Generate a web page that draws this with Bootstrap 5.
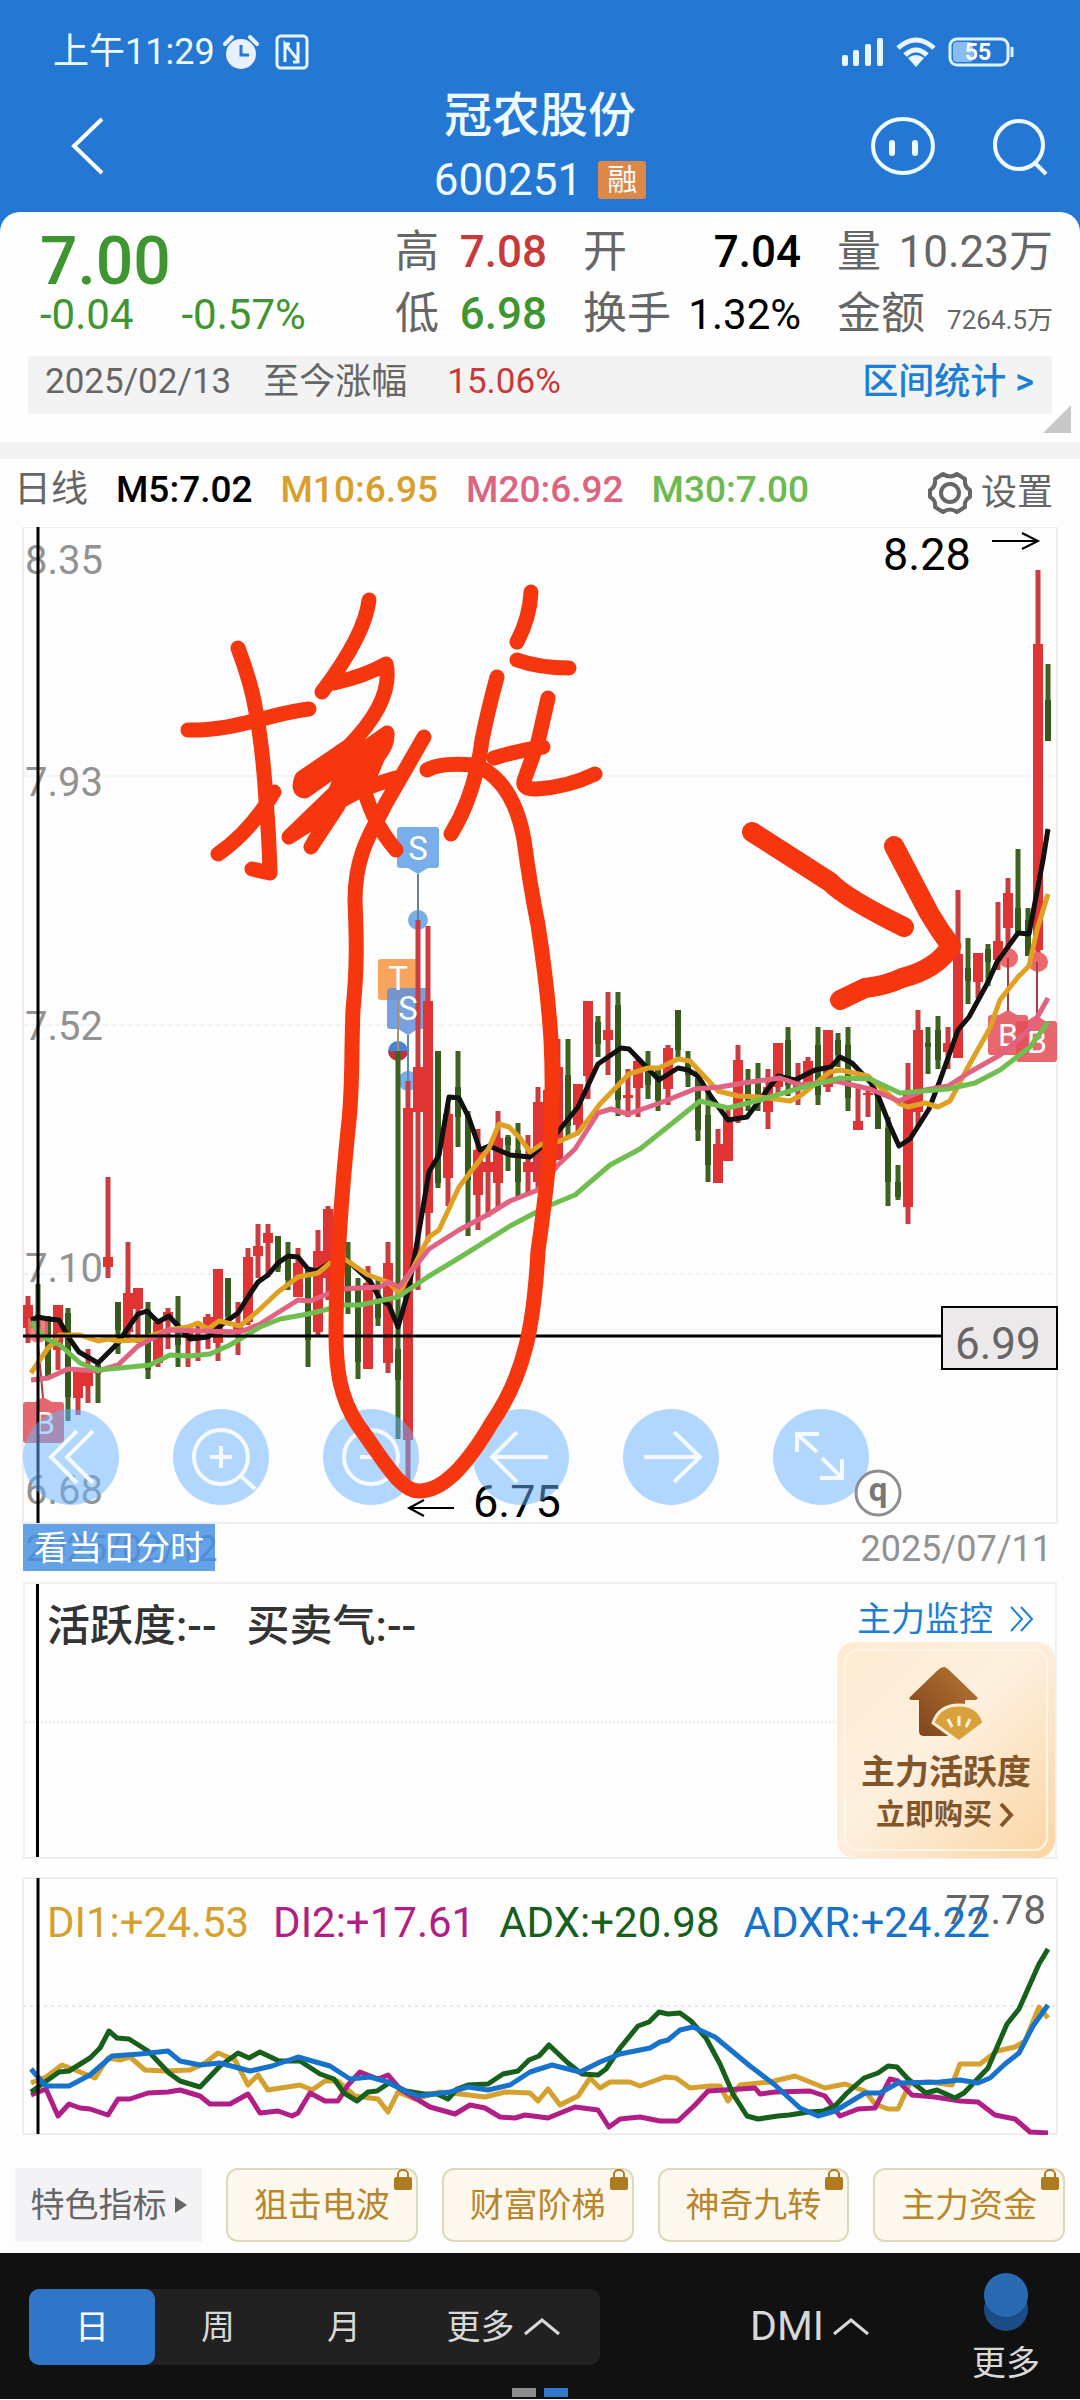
<!DOCTYPE html>
<html lang="zh-CN">
<head>
<meta charset="utf-8">
<meta name="viewport" content="width=device-width, initial-scale=1">
<title>冠农股份 600251</title>
<link href="https://cdn.jsdelivr.net/npm/bootstrap@5.3.0/dist/css/bootstrap.min.css" rel="stylesheet">
<style>
:root{--brand:#2478d4;--up:#c8393b;--down:#3f9630;--ink:#666;--link:#1b7fd6}
body{font-family:Roboto,"Noto Sans CJK SC",sans-serif;background:#fdfdfd;color:var(--ink)}
svg{display:block}
a{text-decoration:none}
button{border:0;padding:0;background:none;color:inherit}
.topbar{background:var(--brand);color:#effaff;padding-top:32px}
.status{height:40px;padding:0 66px 0 53px;font-size:36px;line-height:40px}
.heading{margin-top:12px;padding:0 30px;line-height:64px}
.side{flex:1 1 0}
.back{margin-left:38px}
.robot{margin-right:56px}
.stock-name{font-size:48px;font-weight:500;line-height:64px;margin:0}
.stock-code{font-size:44px}
.margin-tag{background:#dd8847;font-size:30px;line-height:38px;padding:0 9px;border-radius:3px}
.sheet-wrap{background:var(--brand)}
.sheet{background:#fdfefd;border-radius:20px 20px 0 0;padding-bottom:28px}
.quote{display:grid;grid-template-columns:1fr 152px 218px 216px;column-gap:36px;padding:9px 27px 0 40px;font-size:44px;line-height:62px}
.price-block{grid-row:span 2;padding-top:6px;color:var(--down)}
.price-now{font-size:66px;font-weight:500;line-height:70px}
.price-diff{font-size:42px;line-height:36px;gap:48px}
.t42{font-size:42px}.t26{font-size:26px}
.up{color:var(--up)}.down{color:var(--down)}.black{color:#000}
.range-bar{background:#f3f3f3;margin:5px 28px 0;padding:0 18px 0 17px;font-size:36px;line-height:52px;height:58px}
.range-bar a{color:var(--link);font-weight:500}
.t35{font-size:35px}
.corner{right:9px;bottom:9px}
.divider{height:17px;background:#f3f3f3}
.legend-row{height:68px;padding:0 27px 0 14px;font-size:37px;line-height:62px}
.legend-row .items{gap:28px}
.fw5{font-weight:500}
.t36{font-size:36px}
.tools{left:23px;bottom:68px;gap:54px}
.tool{width:96px;height:96px;border-radius:50%;background:rgba(104,178,255,.5)}
.day-btn{left:23px;bottom:2px;height:47px;padding:0 11px;background:rgba(65,142,226,.82);color:#fff;font-size:34px;line-height:44px}
.ink-layer{left:0;top:0;pointer-events:none}
.chart-svg{width:100%}
.panel{margin:9px 23px 0;border:2px solid #f0eff0;border-radius:0}
.activity{height:277px;color:#333;font-size:43px;font-weight:500}
.activity .metrics{padding:12px 0 0 22px;line-height:60px;gap:30px}
.cursor-line{left:11px;top:0;bottom:0;width:3px;background:#000}
.mid-line{left:0;right:0;top:50%;border-top:2px dotted #ececec}
.monitor{color:var(--link);font-size:34px;font-weight:400;line-height:40px;padding:15px 20px 0 0}
.buy{width:218px;height:216px;border-radius:18px;background:linear-gradient(135deg,#fdebd0,#fdf0df 45%,#fbd5a3);color:#83562a;margin-top:3px}
.buy-inner{inset:7px;border:2px solid #fff6e6;border-radius:14px}
.buy-title{font-size:34px;line-height:40px;font-weight:700}
.buy-sub{font-size:29px;line-height:46px;font-weight:700}
.dmi{margin-top:18px}
.dmi-legend{left:47px;top:23px;font-size:42px;line-height:46px;gap:24px;white-space:nowrap}
.dmi-max{right:34px;top:11px;font-size:40px;line-height:46px}
.chips{padding:33px 15px 11px;gap:24px;font-size:34px}
.chip-head{background:#f3f3f5;width:187px;height:74px;line-height:70px}
.chip{height:74px;line-height:68px;border:2px solid #ddd9bb;border-radius:12px;background:#fdf8ee;color:#b8862d;flex:1 1 0}
.chip svg{right:3px;top:-2px}
.bottombar{background:#111;color:#d8d8d8;padding:20px 0 2px;font-size:34px}
.seg{background:#212121;border-radius:10px;margin-left:29px;width:571px;height:76px}
.seg button{width:126px;height:76px;line-height:76px}
.seg .on{background:#2f76c8;color:#fff;border-radius:10px}
.seg .wide{width:193px}
.dmi-btn{font-size:41px;margin-left:150px}
.more{margin-left:auto;margin-right:40px;line-height:34px;gap:15px}
.dot{width:24px;height:9px}
</style>
<script src="https://cdn.jsdelivr.net/npm/bootstrap@5.3.0/dist/js/bootstrap.bundle.min.js"></script>
</head>
<body>
<header class="topbar">
  <div class="status d-flex align-items-center justify-content-between">
    <div class="d-flex align-items-center">
      <span>上午11:29</span>
      <svg class="ms-2" width="36" height="36" viewBox="0 0 36 36"><circle cx="18" cy="20" r="15" fill="#e8f1ff"/><path d="M2 10 9 3M34 10 27 3" stroke="#e8f1ff" stroke-width="4" stroke-linecap="round"/><path d="M18 11v10h8" fill="none" stroke="#2478d4" stroke-width="3"/></svg>
      <svg class="ms-3" width="34" height="36" viewBox="0 0 34 36" fill="none" stroke="#e8f6ff"><rect x="2" y="2" width="30" height="32" rx="4" stroke-width="3"/><path d="M10 28V10l13 16V8M10 10h5M23 28h-5" stroke-width="3"/></svg>
    </div>
    <div class="d-flex align-items-center gap-2">
      <svg width="42" height="28" viewBox="0 0 42 28" fill="#e8f6ff"><rect y="17" width="6" height="11" rx="2"/><rect x="11" y="12" width="6" height="16" rx="2"/><rect x="23" y="6" width="6" height="22" rx="2"/><rect x="35" width="6" height="28" rx="2"/></svg>
      <svg class="ms-1" width="40" height="30" viewBox="0 0 40 30" fill="none" stroke="#e8f6ff" stroke-width="5"><path d="M2 11Q20-5 38 11M9 18Q20 8 31 18"/><path d="M12 21Q20 15 28 21L20 30Z" fill="#e8f6ff" stroke="none"/></svg>
      <svg class="ms-1" width="66" height="30" viewBox="0 0 66 30"><rect x="2" y="2" width="58" height="26" rx="7" fill="none" stroke="#dff3ff" stroke-width="3"/><rect x="5" y="5" width="20" height="20" rx="4" fill="#8bbcf0"/><path d="M64 10v10" stroke="#dff3ff" stroke-width="3"/><text x="30" y="23" text-anchor="middle" font-size="23" font-weight="700" fill="#fff">55</text></svg>
    </div>
  </div>
  <div class="heading d-flex">
    <div class="side d-flex align-items-center">
      <button class="back" aria-label="返回"><svg width="40" height="62" viewBox="0 0 40 62" fill="none" stroke="#fff" stroke-width="4"><path d="M34 2 6 29 34 56"/></svg></button>
    </div>
    <div class="text-center">
      <h1 class="stock-name">冠农股份</h1>
      <div class="d-flex align-items-center justify-content-center"><span class="stock-code">600251</span><span class="margin-tag ms-3">融</span></div>
    </div>
    <div class="side d-flex align-items-center justify-content-end">
      <button class="robot" aria-label="助手"><svg width="66" height="62" viewBox="0 0 66 62" fill="none" stroke="#effaff"><ellipse cx="33" cy="29" rx="30" ry="27" stroke-width="4"/><path d="M22 26v10M45 26v10" stroke-width="6" stroke-linecap="round"/></svg></button>
      <button aria-label="搜索"><svg width="58" height="62" viewBox="0 0 58 62" fill="none" stroke="#effaff" stroke-width="4"><circle cx="27" cy="28" r="24"/><path d="M43 46 54 57"/></svg></button>
    </div>
  </div>
</header>

<main>
<div class="sheet-wrap">
  <section class="sheet position-relative">
    <div class="quote">
      <div class="price-block"><div class="price-now">7.00</div><div class="price-diff d-flex"><span>-0.04</span><span>-0.57%</span></div></div>
      <div class="d-flex justify-content-between"><span>高</span><span class="up fw5">7.08</span></div>
      <div class="d-flex justify-content-between"><span>开</span><span class="black fw5">7.04</span></div>
      <div class="d-flex justify-content-between"><span>量</span><span>10.23万</span></div>
      <div class="d-flex justify-content-between"><span>低</span><span class="down fw5">6.98</span></div>
      <div class="d-flex justify-content-between align-items-baseline"><span>换手</span><span class="black t42">1.32%</span></div>
      <div class="d-flex justify-content-between align-items-baseline"><span>金额</span><span class="t26">7264.5万</span></div>
    </div>
    <div class="range-bar d-flex">
      <span class="t35">2025/02/13</span><span class="ms-4 ps-2">至今涨幅</span><span class="up t35 ms-4 ps-3">15.06%</span>
      <a href="#" class="ms-auto">区间统计 &gt;</a>
    </div>
    <svg class="corner position-absolute" width="28" height="28"><path d="M28 0V28H0Z" fill="#c9c8c9"/></svg>
  </section>
</div>
<div class="divider"></div>

<div class="legend-row d-flex">
  <div class="items d-flex"><span>日线</span><span class="fw5 black">M5:7.02</span><span class="fw5" style="color:#d8a02a">M10:6.95</span><span class="fw5" style="color:#dc6480">M20:6.92</span><span class="fw5" style="color:#6cba50">M30:7.00</span></div>
  <button class="ms-auto d-flex align-items-center t36"><svg class="me-2" width="46" height="44" viewBox="0 0 46 44" fill="none" stroke="#666" stroke-width="4"><path d="M16 3Q23 8 30 3L38 8Q37 16 43 19V26Q37 29 38 36L30 41Q23 36 16 41L8 36Q9 29 3 26V19Q9 16 8 8Z" stroke-linejoin="round"/><circle cx="23" cy="22" r="9"/></svg>设置</button>
</div>

<section class="position-relative">
  <svg class="chart-svg" viewBox="0 527 1080 1046" role="img" aria-label="日K线图">
    <g fill="none" stroke="#efedef" stroke-width="2"><path d="M23 527H1057V1523H23Z"/><path d="M23 776H1057M23 1025H1057M23 1274H1057" stroke-dasharray="5 3" stroke="#f3f1f2"/></g>
    <g font-size="40" fill="#929292"><text x="25" y="574">8.35</text><text x="25" y="796">7.93</text><text x="25" y="1040">7.52</text><text x="25" y="1282">7.10</text><text x="25" y="1504">6.68</text></g>
    <g font-size="36" fill="#929292"><text x="26" y="1561">2025/02/12</text><text x="1052" y="1561" text-anchor="end">2025/07/11</text></g>
    <g fill="#78aeea"><path d="M400 827h36q3 0 3 3v35q0 3-3 3h-8l-10 6-10-6h-8q-3 0-3-3v-35q0-3 3-3Z"/><circle cx="418" cy="920" r="10"/><circle cx="408" cy="1081" r="10"/></g>
    <path d="M418 874V920" stroke="#61859c" stroke-width="2"/>
    <rect x="378" y="959" width="40" height="41" rx="3" fill="#f7a55d"/>
    <path d="M391 988h38v38q0 3-3 3h-8l-10 6-10-6h-8q-3 0-3-3v-35q0-3 4-3Z" fill="#5f91dd" opacity=".85"/>
    <path d="M388 1051a10 10 0 0 1 20 0Z" fill="#4585d3"/><path d="M388 1051a10 10 0 0 0 20 0Z" fill="#bd3440"/>
    <path d="M398 1002V1051" stroke="#aa906c" stroke-width="2"/><path d="M408 1035V1081" stroke="#5b88b8" stroke-width="2"/>
    <g id="candles"></g>
    <g font-size="33" fill="#fff" text-anchor="middle"><text x="418" y="860">S</text><text x="398" y="990">T</text><text x="408" y="1020">S</text></g>
    <g fill="#ee686c"><circle cx="1008" cy="958" r="10"/><circle cx="1038" cy="962" r="10"/></g>
    <path d="M1008 958V1012M1037 962V1015M38 1343 43 1398" stroke="#a83b43" stroke-width="2"/>
    <path d="M28 1318h20v15a10 10 0 0 1-20 0Z" fill="#ee686c" opacity=".85"/>
    <g fill="#e34e56" fill-opacity=".86"><path d="M991 1015h8l9-5 9 5h8q3 0 3 3v34q0 3-3 3h-34q-3 0-3-3v-34q0-3 3-3Z"/><path d="M1019 1021h8l9-6 9 6h9q3 0 3 3v35q0 3-3 3h-35q-3 0-3-3v-35q0-3 3-3Z"/><path d="M26 1402h9l8-5 9 5h9q3 0 3 3v35q0 3-3 3H26q-3 0-3-3v-35q0-3 3-3Z"/></g>
    <g font-size="32" fill="#fff" text-anchor="middle"><text x="1008" y="1046">B</text><text x="1037" y="1053">B</text><text x="45" y="1434">B</text></g>
    <g fill="none" stroke-width="5" stroke-linejoin="round">
      <polyline stroke="#111" points="31,1320 38,1317 48,1319 59,1320 69,1338 79,1352 98,1363 118,1343 128,1328 138,1314 147,1311 158,1322 169,1316 178,1326 190,1339 208,1337 220,1326 238,1313 248,1297 258,1282 268,1275 278,1263 288,1256 298,1257 308,1269 317,1271 330,1263 348,1261 370,1281 380,1299 389,1305 398,1327 408,1292 418,1237 429,1172 439,1155 449,1097 459,1098 469,1118 480,1150 489,1146 510,1155 530,1157 557,1133 578,1107 598,1064 621,1048 629,1049 659,1080 678,1068 688,1070 698,1076 712,1098 728,1120 747,1117 762,1097 778,1076 795,1080 815,1070 831,1067 840,1057 852,1063 871,1083 879,1098 890,1126 899,1146 910,1139 929,1109 939,1083 958,1030 969,1017 988,982 997,962 1018,933 1029,934 1043,860 1048,829"/>
      <polyline stroke="#e0a022" points="31,1373 48,1348 54,1343 59,1335 80,1335 98,1341 108,1339 118,1341 138,1340 168,1330 188,1327 198,1323 208,1329 219,1321 240,1326 258,1311 278,1292 298,1277 318,1273 330,1263 346,1260 368,1275 388,1282 399,1293 413,1268 429,1237 439,1230 459,1187 489,1148 499,1124 509,1127 520,1138 530,1152 542,1144 560,1141 578,1133 600,1104 629,1074 648,1068 659,1068 678,1059 690,1061 718,1091 738,1096 760,1097 790,1101 800,1096 830,1072 840,1070 868,1076 880,1087 900,1104 908,1107 925,1103 938,1107 950,1101 968,1067 990,1028 1000,1000 1018,977 1029,966 1037,930 1048,894"/>
      <polyline stroke="#e26381" points="31,1380 48,1378 68,1369 98,1371 118,1365 138,1346 168,1330 240,1332 260,1324 298,1300 310,1301 340,1289 380,1287 388,1282 399,1287 429,1249 459,1230 489,1214 510,1201 538,1190 558,1165 575,1149 598,1113 611,1109 628,1114 660,1103 695,1089 720,1087 750,1082 780,1078 800,1085 835,1081 870,1089 899,1101 925,1090 948,1086 970,1072 1000,1055 1018,1040 1033,1025 1048,998"/>
      <polyline stroke="#70bd50" points="31,1322 45,1338 60,1345 80,1363 98,1370 120,1368 150,1365 170,1355 190,1356 210,1354 230,1345 260,1327 280,1319 308,1314 345,1305 360,1305 398,1297 429,1276 459,1258 510,1226 548,1206 575,1195 610,1165 640,1149 700,1101 728,1108 760,1100 800,1088 840,1078 870,1079 900,1093 948,1089 975,1083 1000,1070 1030,1047 1048,1022"/>
    </g>
    <path d="M38 527V1523M23 1336H941" stroke="#000" stroke-width="3" fill="none"/>
    <rect x="942" y="1307" width="115" height="62" fill="#ece9eb" stroke="#000" stroke-width="2"/>
    <text x="955" y="1359" font-size="44" fill="#666">6.99</text>
    <g font-size="45" fill="#000"><text x="883" y="570">8.28</text><text x="473" y="1517">6.75</text></g>
    <path d="M992 541H1038M1022 533 1038 541 1022 549M454 1508H409M424 1500 409 1508 424 1516" fill="none" stroke="#000" stroke-width="2"/>
  </svg>
  <div class="tools d-flex position-absolute">
    <button class="tool" aria-label="快退"><svg viewBox="0 0 96 96" fill="none" stroke="#f4faff" stroke-width="4"><path d="M54 22 28 48 54 74M70 22 44 48 70 74"/></svg></button>
    <button class="tool" aria-label="放大"><svg viewBox="0 0 96 96" fill="none" stroke="#f4faff" stroke-width="4"><circle cx="48" cy="48" r="27"/><path d="M37 48H59M48 37V59M68 67 82 80"/></svg></button>
    <button class="tool" aria-label="缩小"><svg viewBox="0 0 96 96" fill="none" stroke="#f4faff" stroke-width="4"><circle cx="48" cy="48" r="27"/><path d="M37 48H59M68 67 82 80"/></svg></button>
    <button class="tool" aria-label="左移"><svg viewBox="0 0 96 96" fill="none" stroke="#f4faff" stroke-width="4"><path d="M75 48H19M44 23 19 48 44 73"/></svg></button>
    <button class="tool" aria-label="右移"><svg viewBox="0 0 96 96" fill="none" stroke="#f4faff" stroke-width="4"><path d="M21 48H77M51 23 77 48 51 73"/></svg></button>
    <button class="tool" aria-label="全屏"><svg viewBox="0 0 96 96" fill="none" stroke="#f4faff" stroke-width="4"><path d="M44 43 24 25M24 43V25H46M49 49 69 69M69 50V69H47"/></svg></button>
  </div>
  <button class="day-btn position-absolute">看当日分时</button>
  <svg class="chart-svg ink-layer position-absolute" viewBox="0 527 1080 1046" fill="none" stroke="#f5360f" stroke-linecap="round" stroke-linejoin="round">
    <g stroke-width="15">
      <path d="M238 648Q252 685 256 712Q263 750 266 800Q269 835 270 873L252 869"/>
      <path d="M188 730C235 731 268 714 309 709M274 792Q250 832 218 854"/>
      <path d="M369 600Q365 635 322 692M334 683Q365 676 386 664Q394 700 349 746L302 778Q297 790 305 791L387 733Q389 755 350 778L289 837L338 806L311 847L335 805Q355 790 396 778"/>
      <path d="M345 765 312 782M372 752 340 780M362 780Q370 820 396 850"/>
      <path d="M350 755 303 785 346 765 386 737 366 785 330 806Z" fill="#f5360f"/>
      <path d="M427 770Q440 762 475 765C500 775 517 800 524 840Q530 885 538 925Q548 990 551 1040Q554 1100 549 1160Q544 1210 538 1251C534 1325 525 1375 491 1424C465 1468 442 1491 419 1491C400 1491 385 1462 358 1425C340 1398 336 1370 336 1333C336 1270 341 1200 348 1130C353 1090 351 1060 353 1010C358 960 356 930 355 900C355 850 376 825 385 805L424 737"/>
      <path d="M531 592Q530 617 517 642M517 660Q540 668 569 668M497 677Q488 710 482 740Q475 795 451 834M548 698 538 742 525 778Q520 790 537 789Q568 787 595 774M494 758Q520 750 543 747"/>
    </g>
    <path stroke-width="20" d="M752 832 830 882Q845 898 904 927M894 846 929 913Q939 930 951 946Q937 969 902 978Q885 986 865 988L840 1000"/>
    <g stroke="#8e8e8e" stroke-width="3"><circle cx="878" cy="1493" r="22" fill="#fff" fill-opacity=".7"/></g>
    <text x="878" y="1501" fill="#777" stroke="none" text-anchor="middle" font-size="33" font-weight="700">q</text>
  </svg>
</section>

<section class="panel activity position-relative d-flex justify-content-between">
  <div class="mid-line position-absolute"></div><div class="cursor-line position-absolute"></div>
  <div class="metrics d-flex"><span>活跃度:--</span><span>买卖气:--</span></div>
  <div class="position-relative">
    <a href="#" class="monitor d-flex justify-content-end align-items-center"><span>主力监控</span><svg class="ms-3" width="26" height="28" viewBox="0 0 26 28" fill="none" stroke="#1b7fd6" stroke-width="2"><path d="M2 2 13 14 2 26M12 2 23 14 12 26"/></svg></a>
    <button class="buy d-flex flex-column align-items-center position-relative">
      <span class="buy-inner position-absolute"></span>
      <svg class="mt-4" width="78" height="78" viewBox="0 0 78 78"><defs><linearGradient id="wood" x1="0" y1="1" x2="1" y2="0"><stop stop-color="#7b421c"/><stop offset="1" stop-color="#b97732"/></linearGradient></defs><path d="M37 1Q34 1 31 4L3 31Q1 34 5 34H12V65Q12 70 17 70H58V34H68Q72 33 70 31L42 4Q39 1 37 1Z" fill="url(#wood)"/><path d="M26 57Q32 39 52 39Q72 39 77 57L52 76Z" fill="#d9a13c" stroke="#fdeed8" stroke-width="3"/><path d="M41 53 45 61M52 50V60M63 53 59 61" stroke="#fff2d5" stroke-width="3"/></svg>
      <span class="buy-title mt-2">主力活跃度</span>
      <span class="buy-sub d-flex align-items-center">立即购买<svg class="ms-1" width="20" height="26" viewBox="0 0 20 26" fill="none" stroke="#83562a" stroke-width="4"><path d="M5 2 15 13 5 24"/></svg></span>
    </button>
  </div>
</section>

<section class="dmi position-relative">
  <svg class="chart-svg" viewBox="0 1876 1080 258" role="img" aria-label="DMI指标">
    <path d="M23 1877H1057V2133H23Z" fill="none" stroke="#efedef" stroke-width="2"/><path d="M23 2005H1057" stroke="#e6e6e6" stroke-width="2" stroke-dasharray="3 4"/>
    <g fill="none" stroke-width="5" stroke-linejoin="round">
      <polyline stroke="#d5a12e" points="31,2082 46,2076 62,2064 75,2069 95,2077 108,2057 120,2059 130,2056 145,2069 165,2070 190,2069 205,2062 218,2052 235,2059 248,2084 258,2074 268,2089 300,2084 312,2089 325,2080 338,2080 355,2095 378,2098 388,2111 398,2091 415,2098 440,2091 460,2093 485,2096 505,2091 530,2092 538,2100 548,2088 560,2104 578,2095 590,2077 600,2087 610,2081 630,2081 640,2085 665,2076 676,2077 690,2087 710,2085 720,2085 728,2100 740,2084 770,2081 795,2075 825,2087 845,2083 865,2090 875,2103 888,2108 898,2108 910,2082 930,2081 952,2084 960,2063 980,2063 997,2050 1015,2046 1025,2040 1039,2006 1048,2017"/>
      <polyline stroke="#b11f86" points="31,2094 46,2088 58,2115 69,2103 80,2107 90,2108 108,2114 118,2098 130,2098 148,2092 168,2091 180,2089 200,2095 210,2103 230,2103 248,2093 260,2112 278,2110 292,2115 298,2112 310,2092 325,2100 338,2100 348,2084 360,2071 378,2078 388,2074 400,2088 430,2106 455,2113 470,2104 485,2107 500,2116 515,2117 525,2114 548,2117 575,2106 598,2109 609,2126 620,2118 640,2116 660,2120 678,2120 695,2104 708,2090 740,2088 755,2087 760,2093 775,2091 810,2090 825,2095 840,2115 858,2108 875,2107 890,2078 898,2080 912,2094 935,2096 960,2100 978,2101 995,2114 1015,2118 1030,2131 1048,2132"/>
      <polyline stroke="#17601c" points="31,2091 59,2071 69,2070 90,2057 100,2047 109,2030 117,2037 129,2038 148,2050 169,2072 180,2080 200,2086 220,2065 238,2052 249,2057 260,2051 279,2060 300,2060 320,2073 334,2078 344,2092 357,2100 368,2091 377,2090 389,2082 406,2090 424,2093 437,2093 448,2098 457,2088 468,2084 488,2083 503,2073 518,2070 529,2059 539,2055 549,2044 568,2062 582,2073 598,2074 606,2068 620,2047 638,2025 649,2021 659,2011 668,2013 680,2012 691,2020 706,2037 720,2063 733,2093 747,2115 758,2118 778,2115 789,2114 809,2111 823,2110 835,2105 847,2092 864,2077 878,2072 888,2065 897,2066 908,2078 926,2092 937,2089 955,2097 964,2092 988,2067 1007,2023 1019,2008 1039,1963 1048,1948"/>
      <polyline stroke="#1672cb" points="31,2068 46,2085 69,2085 90,2074 112,2055 140,2053 168,2050 180,2060 200,2064 220,2062 250,2070 272,2065 298,2056 330,2065 350,2078 370,2076 388,2081 405,2090 418,2095 450,2091 468,2086 488,2089 510,2084 530,2071 552,2064 580,2071 600,2061 620,2053 650,2047 660,2041 668,2039 680,2029 693,2026 715,2036 750,2065 775,2084 800,2107 818,2115 835,2110 865,2092 880,2092 898,2082 940,2081 960,2079 978,2082 990,2077 1005,2063 1019,2052 1033,2025 1048,2004"/>
    </g>
    <path d="M38 1877V2133" stroke="#000" stroke-width="3"/>
  </svg>
  <span class="dmi-max position-absolute">77.78</span>
  <div class="dmi-legend d-flex position-absolute"><span style="color:#d5a12e">DI1:+24.53</span><span style="color:#b11f86">DI2:+17.61</span><span style="color:#17601c">ADX:+20.98</span><span style="color:#1672cb">ADXR:+24.22</span></div>
</section>

<div class="chips d-flex text-center">
  <button class="chip-head d-flex align-items-center justify-content-center">特色指标<svg class="ms-2" width="12" height="16"><path d="M0 0 12 8 0 16Z" fill="#666"/></svg></button>
  <button class="chip position-relative">狙击电波<svg class="lock position-absolute" width="20" height="22" viewBox="0 0 20 22"><path d="M5 10V6a5 4 0 0 1 10 0v4" fill="none" stroke="#ad7a1f" stroke-width="2"/><rect x="1" y="9" width="18" height="13" rx="2" fill="#ad7a1f"/></svg></button>
  <button class="chip position-relative">财富阶梯<svg class="lock position-absolute" width="20" height="22" viewBox="0 0 20 22"><path d="M5 10V6a5 4 0 0 1 10 0v4" fill="none" stroke="#ad7a1f" stroke-width="2"/><rect x="1" y="9" width="18" height="13" rx="2" fill="#ad7a1f"/></svg></button>
  <button class="chip position-relative">神奇九转<svg class="lock position-absolute" width="20" height="22" viewBox="0 0 20 22"><path d="M5 10V6a5 4 0 0 1 10 0v4" fill="none" stroke="#ad7a1f" stroke-width="2"/><rect x="1" y="9" width="18" height="13" rx="2" fill="#ad7a1f"/></svg></button>
  <button class="chip position-relative">主力资金<svg class="lock position-absolute" width="20" height="22" viewBox="0 0 20 22"><path d="M5 10V6a5 4 0 0 1 10 0v4" fill="none" stroke="#ad7a1f" stroke-width="2"/><rect x="1" y="9" width="18" height="13" rx="2" fill="#ad7a1f"/></svg></button>
</div>
</main>

<footer class="bottombar">
  <div class="d-flex align-items-center">
    <div class="seg d-flex">
      <button class="on">日</button><button>周</button><button>月</button>
      <button class="wide d-flex align-items-center justify-content-center">更多<svg class="ms-2" width="38" height="18" viewBox="0 0 38 18" fill="none" stroke="#d8d8d8" stroke-width="3"><path d="M2 16 19 2 36 16"/></svg></button>
    </div>
    <button class="dmi-btn d-flex align-items-center">DMI<svg class="ms-2" width="38" height="18" viewBox="0 0 38 18" fill="none" stroke="#d8d8d8" stroke-width="3"><path d="M2 16 19 2 36 16"/></svg></button>
    <button class="more d-flex flex-column align-items-center"><svg width="44" height="58" viewBox="0 0 44 58"><circle cx="22" cy="36" r="22" fill="#1c4c86"/><circle cx="22" cy="22" r="22" fill="#2a6ab3"/></svg><span>更多</span></button>
  </div>
  <div class="d-flex justify-content-center gap-2 mt-2"><span class="dot" style="background:#8e8e8e"></span><span class="dot" style="background:#2f78cc"></span></div>
</footer>

<script>
// Each row: high, body top, body bottom, low, direction (1 up, 0 down)
const rows = [[1296,1305,1328,1343,1],[1284,1315,1335,1340,0],[1316,1316,1376,1376,0],[1305,1305,1350,1370,1],[1308,1313,1397,1421,0],[1371,1371,1398,1415,1],[1349,1371,1386,1403,1],[1363,1365,1374,1403,0],[1177,1257,1267,1278,1],[1302,1302,1330,1354,0],
[1242,1293,1332,1340,1],[1288,1288,1309,1343,1],[1302,1310,1370,1379,0],[1322,1322,1363,1367,1],[1308,1312,1320,1349,1],[1296,1330,1345,1367,0],[1333,1333,1338,1367,1],[1325,1335,1338,1361,1],[1314,1317,1333,1349,1],[1269,1269,1343,1361,1],
[1278,1278,1317,1325,0],[1302,1325,1333,1355,1],[1248,1257,1322,1325,1],[1224,1246,1256,1278,1],[1224,1233,1243,1277,1],[1236,1236,1268,1272,0],[1242,1255,1280,1290,0],[1248,1263,1297,1297,1],[1267,1270,1340,1367,0],[1230,1251,1332,1336,1],
[1206,1209,1278,1300,1],[1225,1240,1275,1290,1],[1242,1260,1305,1314,0],[1278,1290,1362,1379,0],[1266,1283,1369,1369,1],[1278,1300,1318,1326,0],[1242,1263,1363,1373,1],[1051,1349,1380,1439,0],[1081,1108,1440,1480,1],[920,1067,1112,1290,1],
[926,1001,1213,1242,1],[1051,1051,1183,1188,0],[1105,1114,1178,1206,1],[1051,1087,1117,1147,0],[1111,1115,1180,1236,0],[1129,1150,1195,1230,1],[1148,1162,1172,1217,1],[1111,1138,1183,1208,1],[1135,1137,1145,1171,0],[1123,1150,1182,1196,0],
[1135,1162,1172,1195,1],[1087,1102,1182,1190,1],[1075,1090,1150,1170,1],[1039,1067,1160,1160,1],[1039,1075,1126,1138,0],[1084,1084,1125,1134,1],[1001,1001,1076,1099,1],[1016,1022,1044,1057,0],[992,1030,1040,1075,1],[992,1005,1100,1116,0],
[1069,1095,1098,1117,1],[1057,1061,1088,1117,1],[1051,1070,1085,1099,0],[1067,1070,1100,1111,0],[1045,1048,1089,1105,1],[1010,1010,1050,1057,0],[1051,1060,1075,1087,0],[1069,1078,1130,1141,0],[1089,1115,1165,1182,0],[1129,1144,1183,1183,1],
[1107,1117,1161,1161,1],[1045,1060,1117,1123,1],[1069,1080,1100,1111,0],[1063,1080,1100,1111,0],[1069,1087,1112,1129,1],[1043,1043,1087,1093,1],[1027,1040,1085,1096,0],[1063,1085,1090,1105,1],[1057,1061,1083,1083,1],[1027,1045,1095,1105,0],
[1030,1030,1087,1092,1],[1033,1040,1055,1067,0],[1027,1045,1098,1111,0],[1087,1121,1130,1130,1],[1090,1093,1095,1117,1],[1093,1093,1129,1129,0],[1117,1128,1182,1206,0],[1165,1182,1197,1200,0],[1063,1093,1207,1224,1],[1010,1030,1112,1127,1],
[1027,1043,1047,1074,0],[1016,1030,1060,1069,0],[1027,1043,1052,1069,1],[890,954,1058,1058,1],[938,968,981,1004,0],[953,953,982,998,1],[944,949,962,986,0],[902,941,960,970,1],[878,893,928,948,1],[849,908,932,932,0],
[908,920,956,956,0],[570,644,950,960,1],[664,700,741,741,0]];
document.getElementById('candles').innerHTML = rows.map(([h, t, b, l, up], i) => {
  const x = 28 + i * 10, w = up ? 10 : 6, wick = up ? '#c93d40' : '#3c6420', body = up ? '#df3334' : '#37591c';
  return `<path d="M${x} ${h}V${l}" stroke="${wick}" stroke-width="5"/><path d="M${x} ${t}V${b}" stroke="${body}" stroke-width="${w}"/>`;
}).join('');
</script>
</body>
</html>
